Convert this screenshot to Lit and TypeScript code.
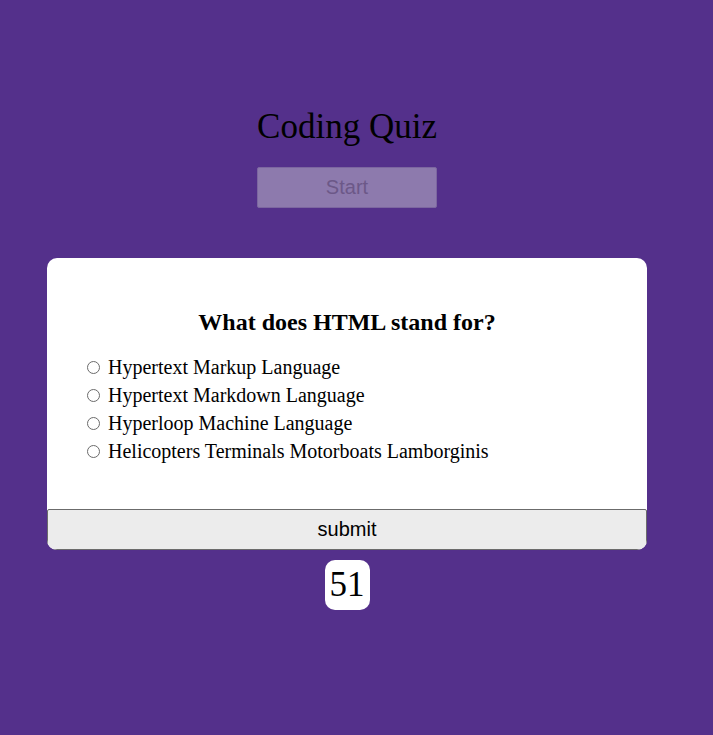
import { LitElement, html, css } from "lit";
import { customElement, state } from "lit/decorators.js";

@customElement("app-root")
export class AppRoot extends LitElement {
  static styles = css`
    :host {
      display: block;
      box-sizing: border-box;
      min-height: 100vh;
      padding: 104px 19px 40px 0;
      background: #54308b;
      color: #000;
      font-family: "Liberation Serif", "Times New Roman", serif;
    }
    .page {
      display: flex;
      flex-direction: column;
      align-items: center;
    }
    .intro {
      display: flex;
      flex-direction: column;
      gap: 17px;
      margin-bottom: 50px;
    }
    .title {
      margin: 0;
      font-size: 35px;
      font-weight: 400;
      line-height: 46px;
    }
    button {
      box-sizing: border-box;
      height: 41px;
      padding: 0;
      font-family: "Liberation Sans", Arial, sans-serif;
      font-size: 20px;
    }
    .start {
      border: 1px solid #7c66a0;
      border-radius: 2px;
      background: #8d7aad;
      color: #6c5888;
    }
    .card {
      box-sizing: border-box;
      width: calc(100% - 40px);
      max-width: 600px;
      overflow: hidden;
      border-radius: 10px;
      background: #fff;
    }
    .question {
      padding: 50px 40px 44px;
    }
    .prompt {
      margin: 0 0 17px;
      text-align: center;
      font-size: 24px;
      font-weight: 700;
      line-height: 28px;
    }
    .option {
      display: flex;
      align-items: center;
      gap: 8px;
      font-size: 20px;
      line-height: 28px;
    }
    .option input {
      box-sizing: border-box;
      appearance: none;
      flex: none;
      width: 13px;
      height: 13px;
      margin: 0;
      border: 1px solid #6b6b6b;
      border-radius: 50%;
      background: #fff;
    }
    .option input:checked {
      background: radial-gradient(#0075ff 3px, #fff 4px);
    }
    .submit {
      display: block;
      width: 100%;
      border: 1px solid #6b6b6b;
      border-radius: 2px;
      background: #ececec;
      color: #000;
    }
    .timer {
      margin-top: 10px;
      padding: 0 5px;
      border-radius: 10px;
      background: #fff;
      font-size: 35px;
      line-height: 50px;
    }
  `;

  @state() private seconds = 51;

  private options = [
    "Hypertext Markup Language",
    "Hypertext Markdown Language",
    "Hyperloop Machine Language",
    "Helicopters Terminals Motorboats Lamborginis",
  ];

  render() {
    return html`
      <main class="page">
        <header class="intro">
          <h1 class="title">Coding Quiz</h1>
          <button class="start" type="button" disabled>Start</button>
        </header>
        <form class="card" @submit=${(e: Event) => e.preventDefault()}>
          <div class="question" role="radiogroup" aria-labelledby="prompt">
            <h2 class="prompt" id="prompt">What does HTML stand for?</h2>
            ${this.options.map(
              (text, i) => html`
                <label class="option">
                  <input type="radio" name="answer" value=${i} />
                  <span>${text}</span>
                </label>
              `
            )}
          </div>
          <button class="submit" type="submit">submit</button>
        </form>
        <div class="timer" role="timer">${this.seconds}</div>
      </main>
    `;
  }
}
